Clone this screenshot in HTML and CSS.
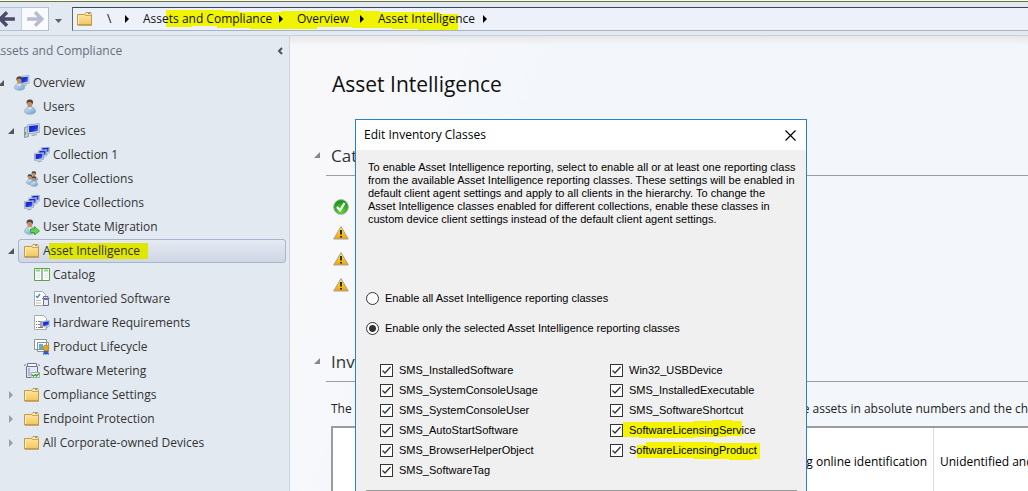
FILE: index.html
```html
<!DOCTYPE html>
<html lang="en">
<head>
<meta charset="utf-8">
<title>Asset Intelligence</title>
<link rel="stylesheet" href="styles.css">
</head>
<body>
<svg class="defs" aria-hidden="true">
  <defs>
    <linearGradient id="gold" x1="0" y1="0" x2="0" y2="1"><stop offset="0" stop-color="#ffeab0"/><stop offset="1" stop-color="#f0c65c"/></linearGradient>
    <linearGradient id="screen" x1="0" y1="0" x2="1" y2="1"><stop offset="0" stop-color="#1020c0"/><stop offset=".6" stop-color="#1a35dd"/><stop offset="1" stop-color="#7a98f4"/></linearGradient>
    <linearGradient id="shirt" x1="0" y1="0" x2="1" y2="1"><stop offset="0" stop-color="#cfe6f8"/><stop offset="1" stop-color="#6f9fc8"/></linearGradient>
    <linearGradient id="warn" x1="0" y1="0" x2="0" y2="1"><stop offset="0" stop-color="#fff04a"/><stop offset="1" stop-color="#f0a000"/></linearGradient>
    <radialGradient id="ok" cx=".5" cy=".75" r=".7"><stop offset="0" stop-color="#5fd83c"/><stop offset="1" stop-color="#129018"/></radialGradient>
    <symbol id="folder" viewBox="0 0 16 16">
      <path d="M.5 3.500h7l1.500-2h5v2h.5v10.500H.5z" fill="url(#gold)" stroke="#c49a45"/>
      <path d="M9.500 2h4v1h-4z" fill="#fff"/><path d="M11 2h2v1h-2z" fill="#4a9be0"/>
      <path d="M8 4.500h6" stroke="#d2a74f"/><path d="M1.500 4.500v8.500" stroke="#fff4cf"/><path d="M1 14h14" stroke="#b08c49"/>
    </symbol>
    <symbol id="person" viewBox="1 0 14 16">
      <path d="M2.500 13c0-3 2-4.500 3.500-5h4c2 .5 3.500 2 3.500 5-2 3-9 3-11 0z" fill="url(#shirt)" stroke="#7ba0c0" stroke-width=".6"/>
      <path d="M6.500 8h3l-1.500 3z" fill="#fff"/><ellipse cx="7.800" cy="4.800" rx="2.600" ry="3.600" fill="#c48e64"/>
      <path d="M4.800 5C4 1 6 .5 8 .5s4 1 2.600 5C10 3.500 9 3 7 3 5.500 3 5.500 4 4.800 5z" fill="#51463e"/>
    </symbol>
    <symbol id="users" viewBox="0 0 16 16"><use href="#person" x="-1" y="0" width="14" height="16"/></symbol>
    <symbol id="monitor" viewBox="0 0 10 11">
      <path d="M.5 1.500l9-1v7l-9 1z" fill="#dfe6f1" stroke="#8b9cb8" stroke-width=".7"/><path d="M1.500 2.300l7-.8v5l-7 .8z" fill="url(#screen)"/><path d="M3 9.500l4-1 1 1-4 1z" fill="#a5acb5"/>
    </symbol>
    <symbol id="overview" viewBox="0 0 16 16"><use href="#monitor" x="4" y="0" width="12" height="12"/><use href="#person" x="-1" y="1" width="13" height="15"/></symbol>
    <symbol id="devices" viewBox="0 0 16 16"><path d="M.5 4.500l4-1v10l-4 1z" fill="#c9ced2" stroke="#8d989f"/><path d="M1.500 9v3" stroke="#49b545"/><use href="#monitor" x="3" y="0" width="13" height="14"/></symbol>
    <symbol id="collection" viewBox="0 0 16 16"><use href="#monitor" x="7" y="-1" width="9" height="10"/><use href="#monitor" x="4" y="2" width="9" height="10"/><use href="#monitor" x="0" y="5" width="10" height="11"/></symbol>
    <symbol id="people" viewBox="0 0 16 16"><use href="#person" x="5" y="0" width="10" height="11"/><use href="#person" x="1" y="3" width="10" height="11"/><use href="#person" x="5" y="5" width="10" height="11"/></symbol>
    <symbol id="migration" viewBox="0 0 16 16"><use href="#person" x="-1" y="0" width="14" height="16"/><path d="M6.500 10h4V7.500L15.500 12l-5 4v-2.500h-4z" fill="#62d64b" stroke="#2e9b29" stroke-width=".8"/></symbol>
    <symbol id="catalog" viewBox="0 0 16 16"><path d="M.5 1.500h15v12H.5z" fill="#fff" stroke="#54a944"/><path d="M8 2v11" stroke="#8c9a9c" stroke-width="1.500"/><path d="M2 3.500h4M10 3.500h4" stroke="#87d27b" stroke-width="2"/><path d="M2 6.500h4M2 8.500h4M2 10.500h4M10 6.500h4M10 8.500h4M10 10.500h4" stroke="#dce6dc"/></symbol>
    <symbol id="inventory" viewBox="0 0 16 16"><path d="M.5.5h8l3 3v11H.5z" fill="#fff" stroke="#aaa"/><path d="M2 5l1.500 1.500L6 3" fill="none" stroke="#2b8ed0" stroke-width="1.300"/><path d="M2 9.500h5M2 12h5" stroke="#b5b9be"/><path d="M8 7.500h7.500M9.500 7V5.500h4.500V7M9.500 8.500h5v6h-5z" fill="#d5d5e9" stroke="#6e6c9e"/><path d="M11 9v5M13 9v5" stroke="#fff"/></symbol>
    <symbol id="hardware" viewBox="0 0 16 16"><path d="M.5.5h9l3 3v11H.5z" fill="#fff" stroke="#aaa"/><path d="M2 6.500h7M2 9.500h4M2 12.500h7" stroke="#777" stroke-dasharray="1 1 5 0"/><path d="M6 6h4v6H6z" fill="#9fa3a6"/><use href="#monitor" x="8" y="5" width="8" height="9"/></symbol>
    <symbol id="lifecycle" viewBox="0 0 16 16"><path d="M.5.500h12v10H.5zM3.500 3.500h11v9h-11z" fill="#fff" stroke="#8d9496"/><path d="M5 5h4v5H5z" fill="#55aee8"/><path d="M10 11l-1 5 2-1 1 1 1-1 2 1-1-5z" fill="#2360ca"/><circle cx="12" cy="9" r="3" fill="#eaa51c" stroke="#bd7910" stroke-width=".6"/></symbol>
    <symbol id="metering" viewBox="0 0 16 16"><path d="M2.500 3.500h11v11h-11z" fill="#e7e8f5" stroke="#716e9e"/><path d="M0 2.500l2-1M14 1.500l2 1M3.500.500h9v3h-9z" fill="#fff" stroke="#716e9e"/><path d="M5 5v8" stroke="#b8b7d6" stroke-width="2"/><path d="M7 9.500h8.500v5H7z" fill="#fff" stroke="#9fa9b3"/><path d="M7.500 11.500l2 1.500 2-1.500 1 1.500 2.500-2.500" fill="none" stroke="#2cad2c" stroke-width="1.500"/></symbol>
    <symbol id="warning" viewBox="0 0 16 16"><path d="M8 1.500L15.300 14H.7z" fill="url(#warn)" stroke="#a6a29a"/><path d="M8 5v4.500M8 11v1.500" stroke="#322b10" stroke-width="2"/></symbol>
    <symbol id="success" viewBox="0 0 16 16"><circle cx="8" cy="8" r="7.400" fill="url(#ok)" stroke="#b0b8ae"/><path d="M4 8l3 3.500L11.500 4" fill="none" stroke="#fff" stroke-width="2.200"/></symbol>
    <symbol id="open" viewBox="0 0 6 6"><path d="M6 0v6H0z" fill="currentColor"/></symbol>
    <symbol id="closed" viewBox="0 0 6 8"><path d="M1 0l4 4-4 4z" fill="#9b9ea3"/></symbol>
    <symbol id="next" viewBox="0 0 6 8"><path d="M1 0l4 4-4 4z" fill="#000"/></symbol>
  </defs>
</svg>

<header class="toolbar">
  <div class="history">
    <button class="history-btn back" aria-label="Back"><svg viewBox="0 0 16 16"><path d="M15 8H3M8 2L2 8l6 6" fill="none" stroke="#4b4a68" stroke-width="3"/></svg></button>
    <button class="history-btn" aria-label="Forward"><svg viewBox="0 0 16 16"><path d="M1 8h12M8 2l6 6-6 6" fill="none" stroke="#b9bccf" stroke-width="3"/></svg></button>
  </div>
  <button class="recent" aria-label="Recent locations"><svg viewBox="0 0 7 4"><path d="M0 0h7L3.500 4z" fill="#596069"/></svg></button>
  <nav class="address" aria-label="Location">
    <svg class="stroke path-stroke" viewBox="0 0 292 20"><path d="M0 0h58v1h15v1h42V1h73V0h8v1h18v1h60v2h18v16h-40v-1h-26v-1H186v-1h-35v2H84v-1H51v-2H26v1H0z" fill="#f0f400"/></svg>
    <svg class="icon"><use href="#folder"/></svg>
    <span class="root">\</span>
    <svg class="next"><use href="#next"/></svg>
    <a href="#assets" class="crumb crumb-wide">Assets and Compliance</a>
    <svg class="next"><use href="#next"/></svg>
    <a href="#overview-page" class="crumb crumb-short">Overview</a>
    <svg class="next"><use href="#next"/></svg>
    <a href="#intelligence" class="crumb crumb-mid">Asset Intelligence</a>
    <svg class="next"><use href="#next"/></svg>
  </nav>
</header>

<div class="workspace">
  <aside class="sidebar">
    <div class="sidebar-head"><span>Assets and Compliance</span><button class="collapse" aria-label="Collapse"><svg viewBox="0 0 6 8"><path d="M5 1L2 4l3 3" fill="none" stroke="#505358" stroke-width="2"/></svg></button></div>
    <ul class="tree">
      <li class="node root-node"><svg class="twisty"><use href="#open"/></svg><a href="#n1"><svg class="icon"><use href="#overview"/></svg>Overview</a></li>
      <li class="node"><span class="twisty"></span><a href="#n2"><svg class="icon"><use href="#users"/></svg>Users</a></li>
      <li class="node"><svg class="twisty"><use href="#open"/></svg><a href="#n3"><svg class="icon"><use href="#devices"/></svg>Devices</a></li>
      <li class="node child"><span class="twisty"></span><a href="#n4"><svg class="icon"><use href="#collection"/></svg>Collection 1</a></li>
      <li class="node"><span class="twisty"></span><a href="#n5"><svg class="icon"><use href="#people"/></svg>User Collections</a></li>
      <li class="node"><span class="twisty"></span><a href="#n6"><svg class="icon"><use href="#collection"/></svg>Device Collections</a></li>
      <li class="node"><span class="twisty"></span><a href="#n7"><svg class="icon"><use href="#migration"/></svg>User State Migration</a></li>
      <li class="node"><svg class="twisty"><use href="#open"/></svg><a href="#n8" class="selected" aria-current="page"><svg class="icon"><use href="#folder"/></svg><svg class="stroke tree-stroke" viewBox="0 0 99 16"><path d="M0 0h99v16H0z" fill="#dfe600"/></svg><span class="over">Asset Intelligence</span></a></li>
      <li class="node child"><span class="twisty"></span><a href="#n9"><svg class="icon"><use href="#catalog"/></svg>Catalog</a></li>
      <li class="node child"><span class="twisty"></span><a href="#n10"><svg class="icon"><use href="#inventory"/></svg>Inventoried Software</a></li>
      <li class="node child"><span class="twisty"></span><a href="#n11"><svg class="icon"><use href="#hardware"/></svg>Hardware Requirements</a></li>
      <li class="node child"><span class="twisty"></span><a href="#n12"><svg class="icon"><use href="#lifecycle"/></svg>Product Lifecycle</a></li>
      <li class="node"><span class="twisty"></span><a href="#n13"><svg class="icon"><use href="#metering"/></svg>Software Metering</a></li>
      <li class="node"><svg class="twisty closed"><use href="#closed"/></svg><a href="#n14"><svg class="icon"><use href="#folder"/></svg>Compliance Settings</a></li>
      <li class="node"><svg class="twisty closed"><use href="#closed"/></svg><a href="#n15"><svg class="icon"><use href="#folder"/></svg>Endpoint Protection</a></li>
      <li class="node"><svg class="twisty closed"><use href="#closed"/></svg><a href="#n16"><svg class="icon"><use href="#folder"/></svg>All Corporate-owned Devices</a></li>
    </ul>
  </aside>

  <main class="content">
    <h1>Asset Intelligence</h1>
    <section>
      <h2><svg class="twisty"><use href="#open"/></svg>Catalog</h2>
      <div class="states">
        <svg><use href="#success"/></svg>
        <svg><use href="#warning"/></svg>
        <svg><use href="#warning"/></svg>
        <svg><use href="#warning"/></svg>
      </div>
    </section>
    <section>
      <h2><svg class="twisty"><use href="#open"/></svg>Inventory</h2>
      <p class="intro"><span class="intro-start">The following</span><span>the assets in absolute numbers and the changes</span></p>
      <table class="summary">
        <tr><th class="col-label"></th><th class="col-pending">Pending online identification</th><th class="col-rest">Unidentified and</th></tr>
      </table>
    </section>
  </main>
</div>

<div class="dialog" role="dialog" aria-labelledby="dialog-title">
  <div class="dialog-head"><h2 id="dialog-title">Edit Inventory Classes</h2><button class="close" aria-label="Close"><svg viewBox="0 0 11 11"><path d="M.5.5l10 10M10.500.5l-10 10" stroke="#000" stroke-width="1.200"/></svg></button></div>
  <form class="dialog-body">
    <p class="help">To enable Asset Intelligence reporting, select to enable all or at least one reporting class<br>from the available Asset Intelligence reporting classes. These settings will be enabled in<br>default client agent settings and apply to all clients in the hierarchy. To change the<br>Asset Intelligence classes enabled for different collections, enable these classes in<br>custom device client settings instead of the default client agent settings.</p>
    <div class="modes">
      <label><input type="radio" name="mode">Enable all Asset Intelligence reporting classes</label>
      <label><input type="radio" name="mode" checked>Enable only the selected Asset Intelligence reporting classes</label>
    </div>
    <div class="classes">
      <label><input type="checkbox" checked>SMS_InstalledSoftware</label>
      <label><input type="checkbox" checked>Win32_USBDevice</label>
      <label><input type="checkbox" checked>SMS_SystemConsoleUsage</label>
      <label><input type="checkbox" checked>SMS_InstalledExecutable</label>
      <label><input type="checkbox" checked>SMS_SystemConsoleUser</label>
      <label><input type="checkbox" checked>SMS_SoftwareShortcut</label>
      <label><input type="checkbox" checked>SMS_AutoStartSoftware</label>
      <label><input type="checkbox" checked><svg class="stroke service-stroke" viewBox="0 0 119 19"><path d="M0 2h71V1h18V0h20v1h10v15h-15v1H71v1H16v-1H0z" fill="#f4f400"/></svg><span class="over">SoftwareLicensingService</span></label>
      <label><input type="checkbox" checked>SMS_BrowserHelperObject</label>
      <label><input type="checkbox" checked><svg class="stroke product-stroke" viewBox="0 0 123 18"><path d="M0 3h9V0h68v1h46v16h-7v1H92v-1H57v-1H0z" fill="#f4f400"/></svg><span class="over">SoftwareLicensingProduct</span></label>
      <label><input type="checkbox" checked>SMS_SoftwareTag</label>
    </div>
    <hr>
  </form>
</div>
</body>
</html>
```

FILE: styles.css
```css
* { box-sizing: border-box; }
body { margin: 0; height: 100vh; display: flex; flex-direction: column; overflow: hidden; position: relative; font: 12px/16px "Open Sans", "Noto Sans", sans-serif; color: #333; }
.defs { position: absolute; width: 0; height: 0; }
a { color: inherit; text-decoration: none; }
button { padding: 0; border: 0; background: none; display: flex; align-items: center; justify-content: center; }
h1, h2, p, ul { margin: 0; padding: 0; font-weight: 400; }
.icon { width: 16px; height: 16px; flex: none; }
.stroke { position: absolute; }
.over { position: relative; }

.toolbar { flex: none; height: 36px; display: flex; padding-top: 5px; background: #e2e9f1; border-top: 1px solid #fbfde0; border-bottom: 1px solid #c8d0da; box-shadow: inset 0 1px #6b7058; }
.history { display: flex; width: 49px; height: 24px; margin-top: 1px; border: 1px solid #b5c0d0; border-left: 0; }
.history-btn { flex: 1; background: #f9fafd; }
.history-btn svg { width: 18px; height: 18px; flex: none; }
.history .back { background: #dfe5f1; border-right: 1px solid #c9d0df; justify-content: flex-end; flex: none; width: 22px; padding-right: 5px; }
.recent { width: 23px; padding-right: 4px; }
.recent svg { width: 7px; height: 4px; }
.address { position: relative; flex: 1; display: flex; align-items: center; height: 24px; margin-top: 1px; padding-left: 4px; background: #ecf1fa; border: 1px solid #a8b4c2; border-top-color: #3d4652; border-left-color: #5e6875; border-right: 0; color: #111; }
.root { width: 31px; padding-left: 14px; position: relative; }
.next { width: 6px; height: 8px; flex: none; position: relative; }
.crumb { position: relative; margin-left: 13px; white-space: nowrap; }
.crumb-wide { width: 135px; }
.crumb-short { width: 62px; }
.crumb-mid { width: 104px; }
.path-stroke { left: 93px; top: 2px; width: 292px; height: 20px; }

.workspace { flex: 1; min-height: 0; display: flex; }
.sidebar { flex: none; width: 290px; background: #e2e9f1; border-right: 1px solid #ccd3dd; overflow: hidden; }
.sidebar-head { display: flex; justify-content: space-between; margin: 7px 5px 12px -7px; color: #65707c; }
.collapse { width: 8px; }
.collapse svg { width: 6px; height: 8px; }
.tree { list-style: none; }
.node { display: flex; align-items: center; height: 24px; padding: 0 3px 0 8px; white-space: nowrap; }
.twisty { width: 6px; height: 6px; flex: none; color: #555; margin-right: 4px; }
.closed { height: 8px; }
.node a { position: relative; flex: 1; display: flex; align-items: center; gap: 3px; height: 24px; padding-left: 5px; border: 1px solid transparent; }
.root-node { padding-left: 0; margin-left: -2px; }
.child { padding-left: 18px; }
.node .selected { border-color: #a9b5cb; border-radius: 3px; background: linear-gradient(#e5eaf3, #cfd7e5); }
.tree-stroke { left: 30px; top: 3px; width: 99px; height: 16px; }

.content { flex: 1; min-width: 0; overflow: hidden; padding-left: 36px; background: linear-gradient(#e7e7e9, transparent 10px), linear-gradient(110deg, #f8f8fa 10%, #f3f7fc 30%); }
h1 { margin: 32px 0 42px 6px; font-size: 21px; line-height: 32px; color: #111; }
.content h2 { position: relative; height: 34px; padding-left: 5px; border-bottom: 1px solid #999ca3; font-size: 17px; line-height: 28px; }
.content h2 .twisty { position: absolute; left: -12px; top: 10px; color: #888; }
.states { display: flex; flex-direction: column; gap: 10px; padding: 23px 0 0 7px; height: 172px; }
.states svg { width: 16px; height: 16px; }
.intro { display: flex; margin: 19px 0 9px 5px; color: #222; white-space: nowrap; }
.intro-start { width: 460px; flex: none; }
.summary { margin-left: 5px; width: 800px; height: 90px; table-layout: fixed; border-collapse: separate; border-spacing: 0; border: 2px solid #999ca1; background: #fff; color: #000; }
.summary th { font-weight: 400; border-right: 1px solid #ddd; padding: 0 6px 18px; text-align: left; vertical-align: middle; white-space: nowrap; }
.summary .col-label { width: 380px; }
.summary .col-pending { width: 221px; text-align: right; }

.dialog { position: absolute; left: 355px; top: 119px; bottom: 0; width: 452px; overflow: hidden; display: flex; flex-direction: column; background: #f0f0f0; border: 1px solid #2583cc; border-bottom: 0; color: #000; }
.dialog-head { height: 30px; display: flex; align-items: center; justify-content: space-between; padding: 0 10px 0 8px; background: #fff; }
.dialog-head h2 { font-size: 12px; line-height: 16px; }
.close svg { width: 11px; height: 11px; }
.dialog-body { padding: 11px 9px 0 10px; font: 11px/13px "Liberation Sans", Arial, sans-serif; }
.help { height: 130px; padding-left: 2px; white-space: nowrap; }
.modes { display: grid; grid-auto-rows: 14px; row-gap: 16px; }
label { position: relative; display: flex; align-items: center; white-space: nowrap; }
input { appearance: none; flex: none; width: 13px; height: 13px; margin: 0 6px 0 0; background: #fff; border: 1px solid #333; }
input[type="radio"] { border-radius: 50%; }
input[type="radio"]:checked { background: radial-gradient(circle, #333 0 3px, #fff 4px); }
input[type="checkbox"]:checked { background: #fff url("data:image/svg+xml,%3Csvg xmlns='http://www.w3.org/2000/svg' viewBox='0 0 11 11'%3E%3Cpath d='M1.500 5.500l2.500 2.500 5.500-6' fill='none' stroke='%23333' stroke-width='1.300'/%3E%3C/svg%3E"); }
.classes { display: grid; grid-template-columns: 230px 1fr; grid-auto-rows: 20px; padding: 25px 0 10px 14px; }
.service-stroke { left: 13px; top: 0; width: 119px; height: 19px; }
.product-stroke { left: 27px; top: 2px; width: 123px; height: 18px; }
hr { margin: 0; border: 0; border-top: 1px solid #999; }
```
